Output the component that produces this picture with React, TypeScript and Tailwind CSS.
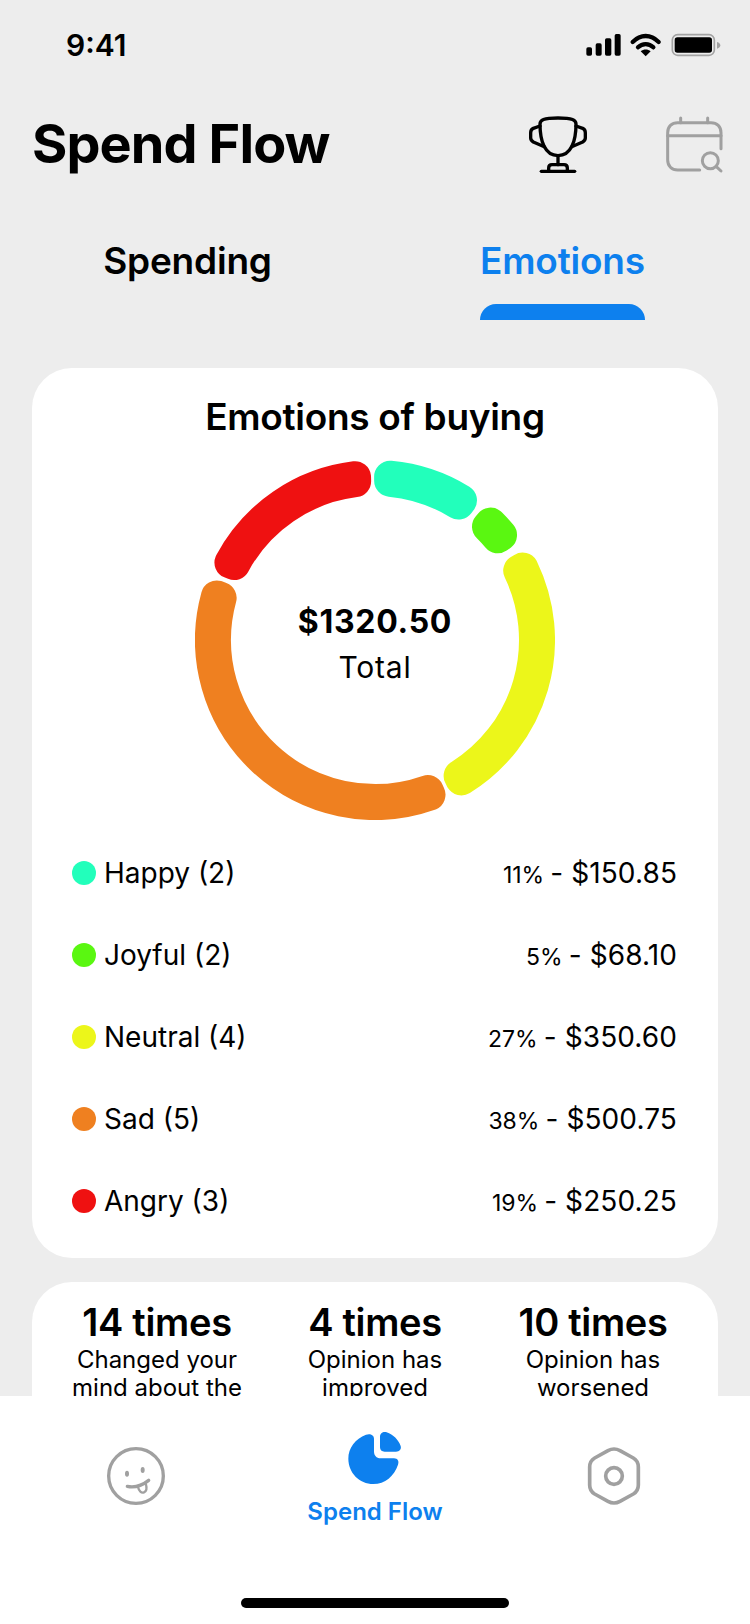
const legend = [
  { name: "Happy (2)", pct: "11%", amount: "$150.85", dot: "bg-[#22ffbb]" },
  { name: "Joyful (2)", pct: "5%", amount: "$68.10", dot: "bg-[#5af711]" },
  { name: "Neutral (4)", pct: "27%", amount: "$350.60", dot: "bg-[#ecf61a]" },
  { name: "Sad (5)", pct: "38%", amount: "$500.75", dot: "bg-[#ef8020]" },
  { name: "Angry (3)", pct: "19%", amount: "$250.25", dot: "bg-[#ef1111]" },
];

const segments = [
  { from: -0.3, to: 37.2, color: "#22ffbb" },
  { from: 39.2, to: 55.8, color: "#5af711" },
  { from: 58.6, to: 153.8, color: "#ecf61a" },
  { from: 155, to: 291, color: "#ef8020" },
  { from: 292.6, to: 358.6, color: "#ef1111" },
];

const stats = [
  { value: "14 times", text: ["Changed your", "mind about the"] },
  { value: "4 times", text: ["Opinion has", "improved"] },
  { value: "10 times", text: ["Opinion has", "worsened"] },
];

// annular sector, inset by the corner radius and stroked with round joins
function sector(from: number, to: number, corner: number) {
  const outer = 180 - corner;
  const inner = 144 + corner;
  const point = (r: number, deg: number) => {
    const a = (deg * Math.PI) / 180;
    return `${(180 + r * Math.sin(a)).toFixed(2)} ${(180 - r * Math.cos(a)).toFixed(2)}`;
  };
  const outInset = (corner / outer) * (180 / Math.PI);
  const inInset = (corner / inner) * (180 / Math.PI);
  const large = to - from > 180 ? 1 : 0;
  return [
    `M${point(outer, from + outInset)}`,
    `A${outer} ${outer} 0 ${large} 1 ${point(outer, to - outInset)}`,
    `L${point(inner, to - inInset)}`,
    `A${inner} ${inner} 0 ${large} 0 ${point(inner, from + inInset)}`,
    "Z",
  ].join(" ");
}

function Donut() {
  return (
    <svg width="360" height="360" viewBox="0 0 360 360">
      {segments.map((s) => (
        <path
          key={s.color}
          d={sector(s.from, s.to, 16)}
          fill={s.color}
          stroke={s.color}
          strokeWidth="32"
          strokeLinejoin="round"
        />
      ))}
    </svg>
  );
}

function StatusIcons() {
  return (
    <svg width="140" height="24" viewBox="75 57 420 72" className="block">
      <rect x="82" y="100" width="17" height="25" rx="5" fill="#000" />
      <rect x="110" y="88" width="18" height="37" rx="5" fill="#000" />
      <rect x="138" y="73" width="19" height="52" rx="5" fill="#000" />
      <rect x="167" y="60" width="18" height="65" rx="5" fill="#000" />
      <path d="M221 84C245 60 275 60 299 84" fill="none" stroke="#000" strokeWidth="13" strokeLinecap="round" />
      <path d="M237 100C250 87 270 87 283 100" fill="none" stroke="#000" strokeWidth="13" strokeLinecap="round" />
      <path d="M245 112C254 105 266 105 275 112L260 127Z" fill="#000" />
      <rect x="340" y="62" width="126" height="62" rx="16" fill="none" stroke="#a3a3a3" strokeWidth="5" />
      <rect x="347" y="70" width="112" height="46" rx="8" fill="#000" />
      <path d="M474 84C481 86 484 90 484 94C484 98 481 102 474 104Z" fill="#a3a3a3" />
    </svg>
  );
}

function TrophyIcon() {
  return (
    <svg width="60" height="60" viewBox="114 70 180 180" fill="none" stroke="#000" strokeWidth="10" strokeLinecap="round" strokeLinejoin="round">
      <path d="M150 100C150 88 160 82 204 82C248 82 258 88 258 100C258 150 244 195 204 195C164 195 150 150 150 100Z" />
      <path d="M150 106L130 113C124 116 122 120 122 126V142C122 148 125 151 130 154L163 168" />
      <path d="M258 106L278 113C284 116 286 120 286 126V142C286 148 283 151 278 154L245 168" />
      <path d="M204 195V222" />
      <path d="M176 241V232C176 226 180 222 186 222H222C228 222 232 226 232 232V241" />
      <path d="M154 242H254" />
    </svg>
  );
}

function CalendarSearchIcon() {
  return (
    <svg width="60" height="60" viewBox="524 78 180 180" fill="none" stroke="#a0a0a0" strokeWidth="9" strokeLinecap="round" strokeLinejoin="round" className="mt-[4px]">
      <path d="M628 240H562C544 240 532 228 532 210V128C532 110 544 98 562 98H662C680 98 692 110 692 128V176" />
      <path d="M532 137H692" />
      <path d="M571 84V98" />
      <path d="M652 84V98" />
      <circle cx="660" cy="212" r="24" />
      <path d="M678 230L692 243" />
    </svg>
  );
}

function SmileIcon() {
  return (
    <svg width="60" height="60" viewBox="47 107 180 180" fill="none" stroke="#a0a0a0" strokeWidth="10" strokeLinecap="round" strokeLinejoin="round">
      <circle cx="137" cy="197" r="82" />
      <ellipse cx="110" cy="190" rx="6" ry="9" fill="#a0a0a0" stroke="none" />
      <ellipse cx="157" cy="179" rx="6" ry="9" fill="#a0a0a0" stroke="none" />
      <path d="M111 228C135 233 156 225 175 210" />
      <path d="M143 230C146 243 153 249 161 246C169 243 170 232 166 218" strokeWidth="7" />
    </svg>
  );
}

function PieIcon() {
  return (
    <svg width="60" height="60" viewBox="45 40 180 180" fill="#0d80ee">
      <path d="M132 72V110C132 123 139 131 152 131H192C203 131 208 140 204 150C193 184 165 208 130 208C88 208 55 174 55 132C55 100 76 72 108 60C120 56 132 60 132 72Z" />
      <path d="M150 66C150 56 160 49 170 53C190 60 205 75 212 94C215 104 208 111 198 111H164C155 111 150 106 150 98Z" />
    </svg>
  );
}

function HexIcon() {
  return (
    <svg width="60" height="60" viewBox="28 33 180 180" fill="none" stroke="#a0a0a0" strokeWidth="11" strokeLinejoin="round">
      <path d="M100 47Q118 37 136 47L176 69Q191 78 191 96V150Q191 168 176 177L136 199Q118 209 100 199L60 177Q45 168 45 150V96Q45 78 60 69Z" />
      <circle cx="118" cy="123" r="25" />
    </svg>
  );
}

export default function App() {
  return (
    <div className="w-[750px] h-[1624px] flex flex-col overflow-hidden bg-[#ededed] text-black [font-family:Inter,sans-serif]">
      <div className="flex-1 min-h-0 overflow-hidden">
        <div className="h-[90px] flex items-center justify-between pl-[66px] pr-[26px]">
          <span className="text-[30px] leading-none font-semibold">9:41</span>
          <StatusIcons />
        </div>

        <div className="h-[108px] flex items-center justify-between pl-[32px] pr-[25px]">
          <h1 className="text-[54px] leading-none font-bold tracking-[-0.9px]">Spend Flow</h1>
          <div className="flex items-center gap-[77px]">
            <TrophyIcon />
            <CalendarSearchIcon />
          </div>
        </div>

        <div className="grid grid-cols-2">
          <div className="flex flex-col items-center pt-[41px]">
            <span className="text-[37px] leading-[44px] font-semibold tracking-[-0.2px]">Spending</span>
          </div>
          <div className="flex flex-col items-center pt-[41px]">
            <span className="text-[37px] leading-[44px] font-semibold tracking-[-0.2px] text-[#0d80ee]">Emotions</span>
            <div className="mt-[21px] w-[165px] h-[16px] rounded-t-[16px] bg-[#0d80ee]" />
          </div>
        </div>

        <div className="px-[32px] pt-[48px]">
          <div className="h-[890px] rounded-[40px] bg-white pt-[27px]">
            <h2 className="text-center text-[37px] leading-[44px] font-semibold tracking-[-0.3px]">Emotions of buying</h2>
            <div className="relative w-[360px] h-[360px] mx-auto mt-[21px]">
              <Donut />
              <div className="absolute inset-0 flex flex-col items-center justify-center pt-[7px]">
                <span className="text-[32px] leading-[40px] font-bold tracking-[0.7px]">$1320.50</span>
                <span className="mt-[6px] text-[30px] leading-[38px] tracking-[0.8px]">Total</span>
              </div>
            </div>
            <div className="mt-[12px] pl-[40px] pr-[41px]">
              {legend.map((row) => (
                <div key={row.name} className="h-[82px] flex items-center justify-between">
                  <div className="flex items-center gap-[8px]">
                    <span className={`w-[24px] h-[24px] rounded-full ${row.dot}`} />
                    <span className="text-[28px] leading-none">{row.name}</span>
                  </div>
                  <div className="flex items-baseline text-[28px] leading-none tracking-[0.1px]">
                    <span className="text-[23px] tracking-normal">{row.pct}</span>
                    <span className="ml-[6px] mr-[8px]">-</span>
                    <span>{row.amount}</span>
                  </div>
                </div>
              ))}
            </div>
          </div>

          <div className="mt-[24px] rounded-[40px] bg-white pt-[18px] h-[200px] grid grid-cols-[250px_186px_250px]">
            {stats.map((s) => (
              <div key={s.value} className="flex flex-col items-center text-center">
                <span className="text-[38px] leading-[44px] font-semibold tracking-[-0.3px]">{s.value}</span>
                <span className="mt-[2px] text-[24px] leading-[27.5px]">{s.text[0]}</span>
                <span className="text-[24px] leading-[27.5px]">{s.text[1]}</span>
              </div>
            ))}
          </div>
        </div>
      </div>

      <nav className="h-[228px] shrink-0 bg-white flex flex-col">
        <div className="flex items-start justify-between px-[106px]">
          <div className="mt-[50px]">
            <SmileIcon />
          </div>
          <div className="mt-[32px] flex flex-col items-center">
            <PieIcon />
            <span className="mt-[10px] text-[24px] leading-[28px] font-semibold text-[#0d80ee]">Spend Flow</span>
          </div>
          <div className="mt-[50px]">
            <HexIcon />
          </div>
        </div>
        <div className="mt-auto mb-[16px] mx-auto w-[268px] h-[10px] rounded-full bg-black" />
      </nav>
    </div>
  );
}
